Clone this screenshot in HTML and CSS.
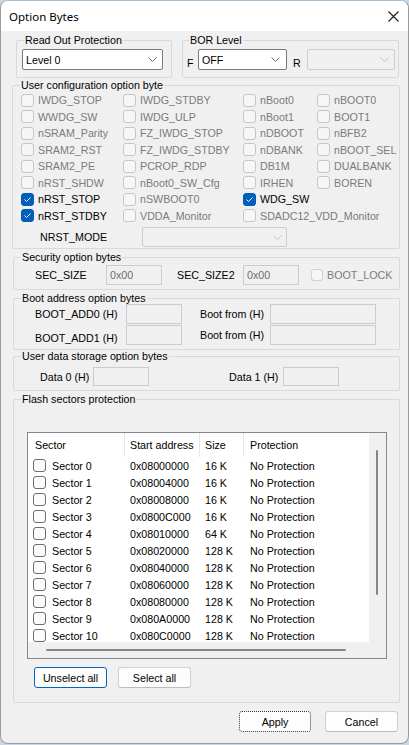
FILE: index.html
```html
<!DOCTYPE html>
<html>
<head>
<meta charset="utf-8">
<title>Option Bytes</title>
<link rel="stylesheet" href="styles.css">
</head>
<body>
<div class="window">
  <div class="titlebar">
    <span class="title">Option Bytes</span>
    <svg class="close" width="11" height="11" viewBox="0 0 11 11"><path d="M0.5 0.5L10.5 10.5M10.5 0.5L0.5 10.5" stroke="#1b1b1b" stroke-width="1.1" fill="none"/></svg>
  </div>
  <div class="client">
    <div class="row-top">
      <div class="group g-rop">
        <div class="legend">Read Out Protection</div>
        <div class="combo c-rop"><span>Level 0</span><svg class="chev" width="9" height="5" viewBox="0 0 9 5"><path d="M0.5 0.5L4.5 4.5L8.5 0.5" stroke="#6a6a6a" fill="none"/></svg></div>
      </div>
      <div class="group g-bor">
        <div class="legend leg-bor">BOR Level</div>
        <div class="bor-row">
          <span class="lbl-f">F</span>
          <div class="combo c-bor"><span>OFF</span><svg class="chev" width="9" height="5" viewBox="0 0 9 5"><path d="M0.5 0.5L4.5 4.5L8.5 0.5" stroke="#6a6a6a" fill="none"/></svg></div>
          <span class="lbl-r">R</span>
          <div class="combo c-bor2 disabled"><span></span><svg class="chev" width="9" height="5" viewBox="0 0 9 5"><path d="M0.5 0.5L4.5 4.5L8.5 0.5" stroke="#c2c2c2" fill="none"/></svg></div>
        </div>
      </div>
    </div>

    <div class="group g-cfg">
      <div class="legend">User configuration option byte</div>
      <div class="cfg-grid">
        <label class="cb"><span class="box"></span>IWDG_STOP</label>
        <label class="cb"><span class="box"></span>IWDG_STDBY</label>
        <label class="cb"><span class="box"></span>nBoot0</label>
        <label class="cb"><span class="box"></span>nBOOT0</label>

        <label class="cb"><span class="box"></span>WWDG_SW</label>
        <label class="cb"><span class="box"></span>IWDG_ULP</label>
        <label class="cb"><span class="box"></span>nBoot1</label>
        <label class="cb"><span class="box"></span>BOOT1</label>

        <label class="cb"><span class="box"></span>nSRAM_Parity</label>
        <label class="cb"><span class="box"></span>FZ_IWDG_STOP</label>
        <label class="cb"><span class="box"></span>nDBOOT</label>
        <label class="cb"><span class="box"></span>nBFB2</label>

        <label class="cb"><span class="box"></span>SRAM2_RST</label>
        <label class="cb"><span class="box"></span>FZ_IWDG_STDBY</label>
        <label class="cb"><span class="box"></span>nDBANK</label>
        <label class="cb"><span class="box"></span>nBOOT_SEL</label>

        <label class="cb"><span class="box"></span>SRAM2_PE</label>
        <label class="cb"><span class="box"></span>PCROP_RDP</label>
        <label class="cb"><span class="box"></span>DB1M</label>
        <label class="cb"><span class="box"></span>DUALBANK</label>

        <label class="cb"><span class="box"></span>nRST_SHDW</label>
        <label class="cb"><span class="box"></span>nBoot0_SW_Cfg</label>
        <label class="cb"><span class="box"></span>IRHEN</label>
        <label class="cb"><span class="box"></span>BOREN</label>

        <label class="cb on"><span class="box"><svg width="11" height="11" viewBox="0 0 11 11"><path d="M2.5 5.5L4.5 7.5L8.5 3.5" stroke="#fff" fill="none"/></svg></span>nRST_STOP</label>
        <label class="cb"><span class="box"></span>nSWBOOT0</label>
        <label class="cb on"><span class="box"><svg width="11" height="11" viewBox="0 0 11 11"><path d="M2.5 5.5L4.5 7.5L8.5 3.5" stroke="#fff" fill="none"/></svg></span>WDG_SW</label>
        <span></span>

        <label class="cb on"><span class="box"><svg width="11" height="11" viewBox="0 0 11 11"><path d="M2.5 5.5L4.5 7.5L8.5 3.5" stroke="#fff" fill="none"/></svg></span>nRST_STDBY</label>
        <label class="cb"><span class="box"></span>VDDA_Monitor</label>
        <label class="cb span2"><span class="box"></span>SDADC12_VDD_Monitor</label>
      </div>
      <div class="nrst">
        <span class="nrst-lbl">NRST_MODE</span>
        <div class="combo c-nrst disabled"><span></span><svg class="chev" width="9" height="5" viewBox="0 0 9 5"><path d="M0.5 0.5L4.5 4.5L8.5 0.5" stroke="#c2c2c2" fill="none"/></svg></div>
      </div>
    </div>

    <div class="group g-sec">
      <div class="legend">Security option bytes</div>
      <div class="sec-row">
        <span class="w71">SEC_SIZE</span>
        <div class="tb">0x00</div>
        <span class="w66 ml15">SEC_SIZE2</span>
        <div class="tb">0x00</div>
        <label class="cb bootlock"><span class="box"></span>BOOT_LOCK</label>
      </div>
    </div>

    <div class="group g-boot">
      <div class="legend">Boot address option bytes</div>
      <div class="boot-row r1">
        <span class="w91">BOOT_ADD0 (H)</span>
        <div class="tb"></div>
        <span class="w70 ml18">Boot from (H)</span>
        <div class="tb wide"></div>
      </div>
      <div class="boot-row r2">
        <span class="w91 low">BOOT_ADD1 (H)</span>
        <div class="tb"></div>
        <span class="w70 ml18">Boot from (H)</span>
        <div class="tb wide"></div>
      </div>
    </div>

    <div class="group g-data">
      <div class="legend">User data storage option bytes</div>
      <div class="data-row">
        <span class="w53">Data 0 (H)</span>
        <div class="tb short"></div>
        <span class="w54 ml80">Data 1 (H)</span>
        <div class="tb short"></div>
      </div>
    </div>

    <div class="group g-flash">
      <div class="legend">Flash sectors protection</div>
      <div class="list">
        <div class="list-main">
          <div class="lv-head">
            <div class="hc c1">Sector</div>
            <div class="hc c2">Start address</div>
            <div class="hc c3">Size</div>
            <div class="hc c4">Protection</div>
          </div>
          <div class="lv-row"><div class="rc c1"><span class="sbox"></span>Sector 0</div><div class="rc c2">0x08000000</div><div class="rc c3">16 K</div><div class="rc c4">No Protection</div></div>
          <div class="lv-row"><div class="rc c1"><span class="sbox"></span>Sector 1</div><div class="rc c2">0x08004000</div><div class="rc c3">16 K</div><div class="rc c4">No Protection</div></div>
          <div class="lv-row"><div class="rc c1"><span class="sbox"></span>Sector 2</div><div class="rc c2">0x08008000</div><div class="rc c3">16 K</div><div class="rc c4">No Protection</div></div>
          <div class="lv-row"><div class="rc c1"><span class="sbox"></span>Sector 3</div><div class="rc c2">0x0800C000</div><div class="rc c3">16 K</div><div class="rc c4">No Protection</div></div>
          <div class="lv-row"><div class="rc c1"><span class="sbox"></span>Sector 4</div><div class="rc c2">0x08010000</div><div class="rc c3">64 K</div><div class="rc c4">No Protection</div></div>
          <div class="lv-row"><div class="rc c1"><span class="sbox"></span>Sector 5</div><div class="rc c2">0x08020000</div><div class="rc c3">128 K</div><div class="rc c4">No Protection</div></div>
          <div class="lv-row"><div class="rc c1"><span class="sbox"></span>Sector 6</div><div class="rc c2">0x08040000</div><div class="rc c3">128 K</div><div class="rc c4">No Protection</div></div>
          <div class="lv-row"><div class="rc c1"><span class="sbox"></span>Sector 7</div><div class="rc c2">0x08060000</div><div class="rc c3">128 K</div><div class="rc c4">No Protection</div></div>
          <div class="lv-row"><div class="rc c1"><span class="sbox"></span>Sector 8</div><div class="rc c2">0x08080000</div><div class="rc c3">128 K</div><div class="rc c4">No Protection</div></div>
          <div class="lv-row"><div class="rc c1"><span class="sbox"></span>Sector 9</div><div class="rc c2">0x080A0000</div><div class="rc c3">128 K</div><div class="rc c4">No Protection</div></div>
          <div class="lv-row"><div class="rc c1"><span class="sbox"></span>Sector 10</div><div class="rc c2">0x080C0000</div><div class="rc c3">128 K</div><div class="rc c4">No Protection</div></div>
        </div>
        <div class="vscroll"><div class="vthumb"></div></div>
        <div class="hscroll"><div class="hthumb"></div></div>
        <div class="corner"></div>
      </div>
      <div class="list-btns">
        <div class="btn focus">Unselect all</div>
        <div class="btn">Select all</div>
      </div>
    </div>

    <div class="footer">
      <div class="btn apply">Apply</div>
      <div class="btn cancel">Cancel</div>
    </div>
  </div>
</div>
</body>
</html>
```

FILE: styles.css
```css
* { box-sizing: border-box; }
html, body { margin: 0; padding: 0; background: #c9d6e4; }
body {
  width: 409px;
  height: 745px;
  overflow: hidden;
  font-family: "Liberation Sans", Arial, sans-serif;
  font-size: 10.7px;
  color: #000;
}
.window {
  width: 409px;
  height: 744px;
  border: 1px solid #9b9b9b;
  border-top-color: #a9bdd2;
  border-radius: 8px;
  overflow: hidden;
  background: #f0f0f0;
}
.titlebar {
  height: 30px;
  background: #ffffff;
  display: flex;
  align-items: center;
  justify-content: space-between;
  padding: 0 9px 0 8px;
}
.title {
  font-family: "Noto Sans", "Liberation Sans", sans-serif;
  font-size: 11.5px;
  color: #000;
  padding-top: 1px;
}
.close { display: block; margin-top: 1px; }

.client { height: 712px; }

.group {
  border: 1px solid #d9d9d9;
  border-radius: 2px;
}
.legend {
  display: block;
  width: fit-content;
  height: 13px;
  line-height: 13px;
  margin: -7px 0 0 7px;
  padding: 0 1px;
  background: #f0f0f0;
  white-space: nowrap;
}
.leg-bor { margin-left: 6px; }

/* top row */
.row-top {
  display: flex;
  gap: 10px;
  margin: 9px 0 0 15px;
}
.g-rop { width: 156px; height: 38px; }
.g-bor { width: 217px; height: 38px; }

.combo {
  height: 21px;
  border: 1px solid #7a7a7a;
  border-radius: 2px;
  background: #ffffff;
  display: flex;
  align-items: center;
  justify-content: space-between;
  padding: 0 5px 0 3px;
}
.combo .chev { display: block; flex: none; }
.combo.disabled { border-color: #cccccc; background: #f0f0f0; }
.c-rop { width: 141px; margin: 2px 0 0 5px; }
.bor-row {
  display: flex;
  align-items: center;
  margin-top: 2px;
  padding-left: 4px;
}
.lbl-f { width: 11px; padding-top: 7px; }
.lbl-r { width: 14px; margin-left: 6px; padding-top: 7px; }
.c-bor { width: 89px; padding-right: 6px; }
.c-bor2 { width: 88px; padding-right: 5px; }

/* user config */
.g-cfg { width: 388px; height: 164px; margin: 7px 0 0 11px; }
.cfg-grid {
  display: grid;
  grid-template-columns: 102px 120px 74px 1fr;
  grid-auto-rows: 16.5px;
  padding-left: 8px;
}
.cb {
  display: flex;
  align-items: center;
  white-space: nowrap;
  color: #7b7b7b;
}
.cb .box {
  width: 13px;
  height: 13px;
  flex: none;
  border: 1px solid #c6c6c6;
  border-radius: 3px;
  background: #f6f6f6;
  margin-right: 4px;
}
.cb .box svg { display: block; }
.cb.on { color: #000; }
.cb.on .box { background: #005fb8; border-color: #005fb8; }
.span2 { grid-column: 3 / span 2; }

.nrst {
  display: flex;
  align-items: center;
  margin-top: 3px;
  padding-left: 27px;
}
.nrst-lbl { width: 102px; }
.c-nrst { width: 145px; height: 20px; padding-right: 4px; }

/* security */
.g-sec { width: 387px; height: 33px; margin: 8px 0 0 12px; }
.sec-row {
  display: flex;
  align-items: center;
  margin-top: 1px;
  padding-left: 21px;
}
.w71 { width: 71px; }
.w66 { width: 66px; }
.w91 { width: 91px; }
.w70 { width: 70px; }
.w53 { width: 53px; }
.w54 { width: 54px; }
.ml15 { margin-left: 15px; }
.ml18 { margin-left: 18px; }
.ml80 { margin-left: 80px; }
.tb {
  width: 56px;
  height: 20px;
  border: 1px solid #cccccc;
  background: #f0f0f0;
  color: #6d6d6d;
  padding-left: 3px;
  display: flex;
  align-items: center;
}
.tb.wide { width: 106px; }
.tb.short { height: 19px; }
.bootlock { margin-left: 12px; }
.bootlock .box { width: 12px; height: 12px; border-color: #d0d0d0; }

/* boot */
.g-boot { width: 387px; height: 52px; margin: 8px 0 0 12px; }
.boot-row {
  display: flex;
  align-items: center;
  padding-left: 21px;
}
.boot-row.r1 { margin-top: -1px; }
.boot-row.r2 { margin-top: 1px; }
.low { padding-top: 6px; }

/* data */
.g-data { width: 387px; height: 35px; margin: 6px 0 0 12px; }
.data-row {
  display: flex;
  align-items: center;
  margin-top: 4px;
  padding-left: 26px;
}

/* flash */
.g-flash { width: 387px; height: 304px; margin: 8px 0 0 12px; }
.list {
  width: 360px;
  height: 227px;
  margin: 26px 0 0 13px;
  border: 1px solid #828790;
  background: #f0f0f0;
  display: grid;
  grid-template-columns: 341px 17px;
  grid-template-rows: 209px 16px;
}
.list-main {
  background: #ffffff;
  overflow: hidden;
}
.lv-head, .lv-row {
  display: grid;
  grid-template-columns: 97px 75px 44px 1fr;
}
.lv-head { height: 24px; }
.hc {
  display: flex;
  align-items: center;
  border-right: 1px solid #e5e5e5;
  white-space: nowrap;
}
.hc.c4 { border-right: none; }
.hc.c1 { padding-left: 7px; }
.hc.c2, .hc.c3 { padding-left: 5px; }
.hc.c4 { padding-left: 6px; }
.lv-row { height: 17px; }
.rc {
  display: flex;
  align-items: center;
  white-space: nowrap;
}
.rc.c1 { padding-left: 5px; }
.rc.c2, .rc.c3 { padding-left: 5px; }
.rc.c4 { padding-left: 6px; }
.sbox {
  width: 13px;
  height: 13px;
  flex: none;
  border: 1px solid #6e6e6e;
  border-radius: 3px;
  background: #fbfbfb;
  margin-right: 6px;
}
.vscroll {
  background: #f0f0f0;
  padding: 17px 0 0 7px;
}
.vthumb {
  width: 2px;
  height: 145px;
  background: #858585;
  border-radius: 1px;
}
.hscroll {
  background: #f0f0f0;
  padding: 7px 0 0 18px;
}
.hthumb {
  width: 300px;
  height: 2px;
  background: #858585;
  border-radius: 1px;
}
.corner { background: #f0f0f0; }

.list-btns {
  display: flex;
  gap: 11px;
  margin: 8px 0 0 20px;
}
.btn {
  width: 73px;
  height: 21px;
  border: 1px solid #d0d0d0;
  border-bottom-color: #bcbcbc;
  border-radius: 3px;
  background: #fdfdfd;
  display: flex;
  align-items: center;
  justify-content: center;
  white-space: nowrap;
}
.btn.focus { border-color: #0067c0; }
.footer {
  display: flex;
  justify-content: flex-end;
  gap: 14px;
  margin-top: 8px;
  padding-right: 10px;
}
.btn.apply {
  width: 72px;
  border: 1px dotted #333333;
}
.btn.cancel { width: 73px; }
```
